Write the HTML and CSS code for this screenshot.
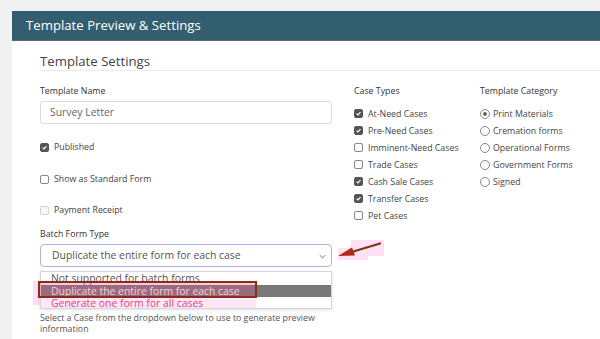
FILE: index.html
```html
<!DOCTYPE html>
<html>
<head>
<meta charset="utf-8">
<link rel="stylesheet" href="styles.css">
</head>
<body>
<div class="panel">
  <div class="panel-head">Template Preview &amp; Settings</div>
  <div class="panel-body">
    <h2 class="section-title">Template Settings</h2>
    <div class="grid">
      <div class="col-main">
        <div class="field-label">Template Name</div>
        <div class="input">Survey Letter</div>
        <div class="check-row row-published"><span class="cb checked"><svg viewBox="0 0 10 10"><path d="M2.3 5.2 L4.2 7.1 L7.8 2.9" fill="none" stroke="#fff" stroke-width="1.6"/></svg></span>Published</div>
        <div class="check-row row-standard"><span class="cb"></span>Show as Standard Form</div>
        <div class="check-row row-receipt"><span class="cb disabled"></span>Payment Receipt</div>
        <div class="field-label batch-label">Batch Form Type</div>
        <div class="select-wrap">
          <div class="select">Duplicate the entire form for each case<svg class="chev" viewBox="0 0 10 6"><path d="M1 1 L5 5 L9 1" fill="none" stroke="#555" stroke-width="1.2"/></svg></div>
          <div class="glow glow-rows"></div>
          <div class="dropdown">
            <div class="opt">Not supported for batch forms</div>
            <div class="opt selected">Duplicate the entire form for each case</div>
            <div class="opt pink">Generate one form for all cases</div>
          </div>
          <div class="red-box"></div>
          <svg class="arrow" viewBox="0 0 60 24">
            <rect x="15" y="0" width="33" height="16" fill="#fde0f3"/>
            <rect x="2" y="8" width="30" height="12" fill="#fde0f3"/>
            <path d="M44 3.5 L14 12.5" stroke="#7a3512" stroke-width="2.2" stroke-linecap="round"/>
            <path d="M2 16 L16 7.5 L19 15.5 Z" fill="#b02818"/>
          </svg>
        </div>
        <p class="hint">Select a Case from the dropdown below to use to generate preview information</p>
      </div>
      <div class="col-list">
        <div class="field-label">Case Types</div>
        <ul class="opts">
          <li><span class="cb checked"><svg viewBox="0 0 10 10"><path d="M2.3 5.2 L4.2 7.1 L7.8 2.9" fill="none" stroke="#fff" stroke-width="1.6"/></svg></span>At-Need Cases</li>
          <li><span class="cb checked"><svg viewBox="0 0 10 10"><path d="M2.3 5.2 L4.2 7.1 L7.8 2.9" fill="none" stroke="#fff" stroke-width="1.6"/></svg></span>Pre-Need Cases</li>
          <li><span class="cb"></span>Imminent-Need Cases</li>
          <li><span class="cb"></span>Trade Cases</li>
          <li><span class="cb checked"><svg viewBox="0 0 10 10"><path d="M2.3 5.2 L4.2 7.1 L7.8 2.9" fill="none" stroke="#fff" stroke-width="1.6"/></svg></span>Cash Sale Cases</li>
          <li><span class="cb checked"><svg viewBox="0 0 10 10"><path d="M2.3 5.2 L4.2 7.1 L7.8 2.9" fill="none" stroke="#fff" stroke-width="1.6"/></svg></span>Transfer Cases</li>
          <li><span class="cb"></span>Pet Cases</li>
        </ul>
      </div>
      <div class="col-list">
        <div class="field-label">Template Category</div>
        <ul class="opts">
          <li><span class="rb on"></span>Print Materials</li>
          <li><span class="rb"></span>Cremation forms</li>
          <li><span class="rb"></span>Operational Forms</li>
          <li><span class="rb"></span>Government Forms</li>
          <li><span class="rb"></span>Signed</li>
        </ul>
      </div>
    </div>
  </div>
</div>
</body>
</html>
```

FILE: styles.css
```css
* { box-sizing: border-box; }
html, body { margin: 0; padding: 0; }
body {
  background: #f1f1f1;
  font-family: "Open Sans", "Lato", sans-serif;
  color: #444;
  width: 600px;
  height: 339px;
  overflow: hidden;
}
.panel {
  margin: 11px 0 0 12px;
  background: #fff;
  height: 340px;
}
.panel-head {
  height: 30px;
  background: #335e70;
  color: #fff;
  font-size: 13.2px;
  line-height: 29px;
  padding-left: 14px;
  border-bottom: 1px solid #4a6f7d;
}
.panel-body {
  padding: 11px 0 0 28px;
}
.section-title {
  margin: 0;
  font-weight: normal;
  font-size: 13.2px;
  line-height: 18px;
  color: #444;
  border-bottom: 1px solid #ebebeb;
}
.grid {
  display: grid;
  grid-template-columns: 314px 126px 1fr;
  margin-top: 14px;
}
.col-main { width: 292px; }
.field-label {
  font-size: 8.8px;
  line-height: 12px;
  color: #333;
  white-space: nowrap;
}
.input {
  margin-top: 4px;
  height: 23px;
  border: 1px solid #dcdcdc;
  border-radius: 3px;
  padding-left: 9px;
  font-size: 10.4px;
  line-height: 21px;
  color: #666;
}
.check-row {
  display: flex;
  align-items: center;
  height: 14px;
  font-size: 8.8px;
  color: #444;
  white-space: nowrap;
}
.row-published { margin-top: 16px; }
.row-standard { margin-top: 18px; }
.row-receipt { margin-top: 17px; }
.batch-label { margin-top: 11px; }
.cb {
  width: 9px;
  height: 9px;
  border: 1px solid #888;
  border-radius: 2px;
  background: #fff;
  margin-right: 5px;
  flex: none;
  display: inline-flex;
}
.cb svg { width: 100%; height: 100%; }
.cb.checked { background: #555; border-color: #555; }
.cb.disabled { border-color: #d4d4d4; background: #f6f6f6; }
.rb {
  width: 10px;
  height: 10px;
  border: 1px solid #888;
  border-radius: 50%;
  margin-right: 3px;
  flex: none;
  position: relative;
}
.rb.on::after {
  content: "";
  position: absolute;
  left: 2px; top: 2px;
  width: 4px; height: 4px;
  border-radius: 50%;
  background: #666;
}
.select-wrap {
  position: relative;
  margin-top: 4px;
}
.select {
  height: 23px;
  border: 1px solid #a9b8e0;
  border-radius: 4px;
  padding-left: 11px;
  font-size: 10.4px;
  line-height: 21px;
  color: #555;
  position: relative;
}
.chev {
  position: absolute;
  right: 5px;
  top: 9px;
  width: 7px;
  height: 5px;
}
.dropdown {
  position: absolute;
  left: 0;
  top: 27px;
  width: 292px;
  height: 38px;
  border: 1px solid #d6d6d6;
  background: #fff;
  box-shadow: 0 1px 3px rgba(0,0,0,0.12);
  overflow: hidden;
}
.opt {
  height: 12.5px;
  font-size: 10.4px;
  line-height: 12.5px;
  padding-left: 10px;
  color: #555;
  white-space: nowrap;
}
.opt.selected { background: #787878; color: #fff; }
.opt.pink { color: #e0457d; }
.glow {
  position: absolute;
  background: #fde0f3;
}
.glow-rows {
  left: -7px;
  top: 37px;
  width: 222px;
  height: 24px;
}
.dropdown .opt.pink { background: linear-gradient(to right, #fde6f5 0, #fde6f5 215px, #fff 215px); }
.red-box {
  position: absolute;
  left: -2px;
  top: 37px;
  width: 219px;
  height: 17px;
  border: 2px solid #8c2b1a;
  background: rgba(230, 80, 140, 0.3);
}
.arrow {
  position: absolute;
  left: 296px;
  top: -4px;
  width: 60px;
  height: 24px;
}
.hint {
  margin: 46px 0 0;
  font-size: 8.8px;
  line-height: 11px;
  color: #555;
  width: 292px;
}
.opts {
  list-style: none;
  margin: 8px 0 0;
  padding: 0;
}
.opts li {
  display: flex;
  align-items: center;
  height: 17px;
  font-size: 8.8px;
  color: #444;
  white-space: nowrap;
}
```
